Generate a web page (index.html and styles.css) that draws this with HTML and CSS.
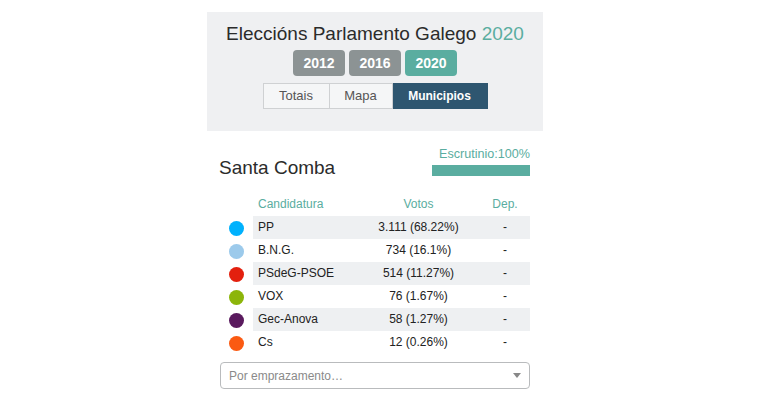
FILE: index.html
```html
<!DOCTYPE html>
<html lang="gl">
<head>
<meta charset="utf-8">
<title>Eleccións Parlamento Galego 2020</title>
<link rel="stylesheet" href="styles.css">
</head>
<body>
<div class="page">
  <div class="widget">
    <header class="head">
      <h1 class="title">Eleccións Parlamento Galego <span class="accent">2020</span></h1>
      <div class="years">
        <span class="year">2012</span>
        <span class="year">2016</span>
        <span class="year year-active">2020</span>
      </div>
      <div class="tabs">
        <span class="tab">Totais</span>
        <span class="tab">Mapa</span>
        <span class="tab tab-active">Municipios</span>
      </div>
    </header>
    <section class="muni">
      <div class="muni-top">
        <h2 class="muni-name">Santa Comba</h2>
        <div class="progress">
          <div class="progress-label">Escrutinio:100%</div>
          <div class="progress-bar"></div>
        </div>
      </div>
      <table class="results">
        <thead>
          <tr>
            <th class="c-dot"></th>
            <th class="c-name">Candidatura</th>
            <th class="c-votes">Votos</th>
            <th class="c-dep">Dep.</th>
          </tr>
        </thead>
        <tbody>
          <tr><td class="c-dot"><span class="dot dot-pp"></span></td><td class="c-name">PP</td><td class="c-votes">3.111 (68.22%)</td><td class="c-dep">-</td></tr>
          <tr><td class="c-dot"><span class="dot dot-bng"></span></td><td class="c-name">B.N.G.</td><td class="c-votes">734 (16.1%)</td><td class="c-dep">-</td></tr>
          <tr><td class="c-dot"><span class="dot dot-psoe"></span></td><td class="c-name">PSdeG-PSOE</td><td class="c-votes">514 (11.27%)</td><td class="c-dep">-</td></tr>
          <tr><td class="c-dot"><span class="dot dot-vox"></span></td><td class="c-name">VOX</td><td class="c-votes">76 (1.67%)</td><td class="c-dep">-</td></tr>
          <tr><td class="c-dot"><span class="dot dot-gec"></span></td><td class="c-name">Gec-Anova</td><td class="c-votes">58 (1.27%)</td><td class="c-dep">-</td></tr>
          <tr><td class="c-dot"><span class="dot dot-cs"></span></td><td class="c-name">Cs</td><td class="c-votes">12 (0.26%)</td><td class="c-dep">-</td></tr>
        </tbody>
      </table>
      <div class="select">
        <span class="select-text">Por emprazamento…</span>
        <svg class="select-arrow" width="8" height="5" viewBox="0 0 8 5"><path d="M0 0H8L4 5Z" fill="#888"/></svg>
      </div>
    </section>
  </div>
</div>
</body>
</html>
```

FILE: styles.css
```css
* { box-sizing: border-box; }

body {
  margin: 0;
  background: #fff;
  font-family: "Liberation Sans", Arial, sans-serif;
  color: #222;
}

.page {
  width: 750px;
}

.widget {
  width: 336px;
  margin: 12px auto 0;
}

.head {
  background: #eff0f2;
  padding: 11px 0 22px;
  text-align: center;
}

.title {
  margin: 0;
  font-size: 19px;
  line-height: 22px;
  font-weight: normal;
  color: #2b2b2b;
}

.accent { color: #5aada0; }

.years {
  display: flex;
  justify-content: center;
  gap: 4px;
  margin-top: 5px;
}

.year {
  width: 52px;
  height: 26px;
  line-height: 26px;
  border-radius: 4px;
  background: #8c9394;
  color: #fff;
  font-weight: bold;
  font-size: 14px;
}

.year-active { background: #5aada0; }

.tabs {
  display: flex;
  justify-content: center;
  margin-top: 7px;
}

.tab {
  height: 26px;
  line-height: 24px;
  border: 1px solid #cfd1d3;
  background: #f5f6f7;
  color: #555;
  font-size: 13px;
}

.tab + .tab { border-left: none; }

.tab:nth-child(1) { width: 67px; }
.tab:nth-child(2) { width: 63px; }

.tab-active {
  width: 95px;
  background: #2e5670;
  border-color: #2e5670;
  color: #fff;
  font-weight: bold;
  font-size: 12px;
}

.muni {
  padding: 16px 13px 0 13px;
}

.muni-top {
  display: flex;
  justify-content: space-between;
  align-items: flex-start;
}

.muni-name {
  margin: 10px 0 0 -1px;
  font-size: 19px;
  line-height: 22px;
  font-weight: normal;
  color: #2b2b2b;
}

.progress {
  width: 98px;
  display: flex;
  flex-direction: column;
  align-items: flex-end;
}

.progress-label {
  font-size: 12.6px;
  line-height: 15px;
  color: #5aada0;
  white-space: nowrap;
}

.progress-bar {
  width: 98px;
  height: 11px;
  margin-top: 3px;
  background: #5aada0;
}

.results {
  width: 310px;
  margin-top: 13px;
  border-collapse: collapse;
  font-size: 12px;
  line-height: 15px;
}

.results th {
  height: 24px;
  font-weight: normal;
  color: #5aada0;
  padding: 0 5px;
}

.results td {
  height: 23px;
  padding: 0 5px;
  color: #222;
}

.results tbody tr:nth-child(odd) td:not(.c-dot) { background: #eef0f2; }

.c-dot { width: 33px; padding: 0 !important; }
.c-name { width: 104px; text-align: left; }
.c-votes { width: 123px; text-align: center; }
.c-dep { width: 50px; text-align: center; }

.dot {
  display: block;
  width: 15px;
  height: 15px;
  border-radius: 50%;
  margin: 2px 0 0 9px;
}

.dot-pp { background: #00b1fd; }
.dot-bng { background: #9ccaeb; }
.dot-psoe { background: #e3200e; }
.dot-vox { background: #8cb50a; }
.dot-gec { background: #5a1a5e; }
.dot-cs { background: #fb5a12; }

.select {
  width: 310px;
  height: 27px;
  margin-top: 8px;
  border: 1px solid #b9bbbd;
  border-radius: 4px;
  display: flex;
  align-items: center;
  justify-content: space-between;
  padding: 0 8px 0 8px;
}

.select-text {
  font-size: 12px;
  color: #8a8a8a;
}
```
